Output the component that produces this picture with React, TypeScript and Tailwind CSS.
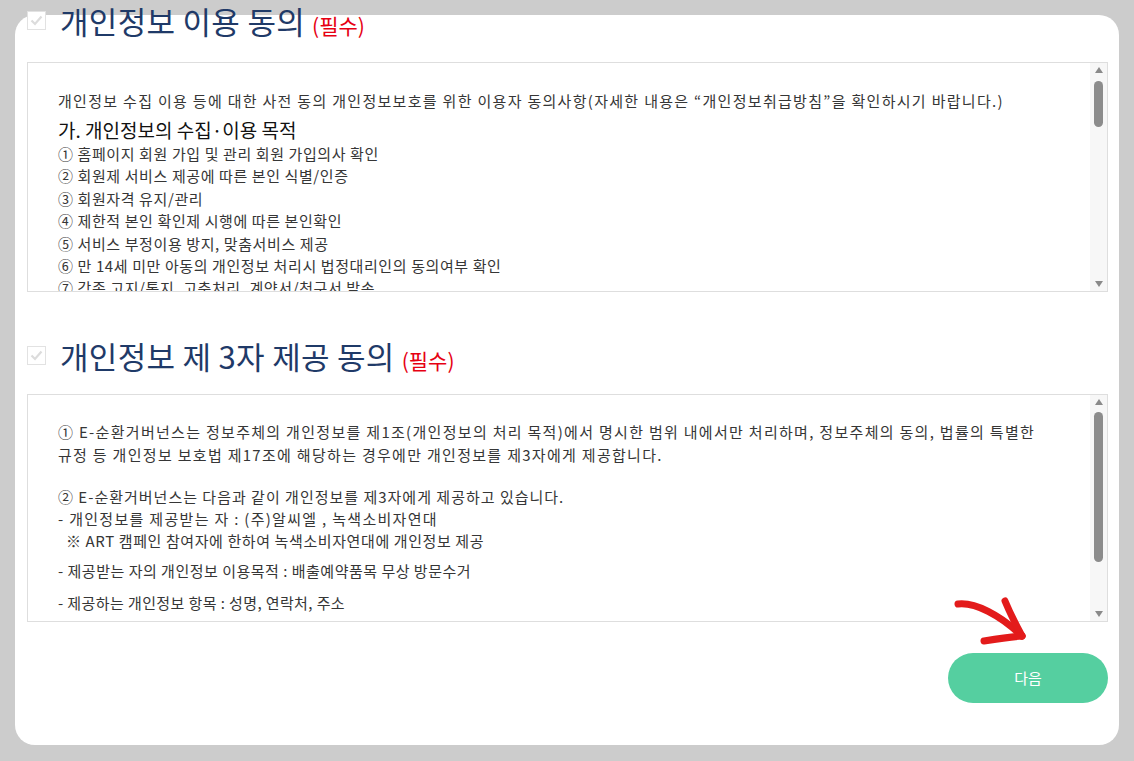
const FONT = "font-['Noto_Sans_CJK_KR','Noto_Sans',sans-serif]";

const FakeCheckbox = () => (
    <span className="flex h-[19px] w-[19px] shrink-0 items-center justify-center border border-[#e2e2e2] bg-white">
        <svg width="13" height="11" viewBox="0 0 13 11">
            <path d="M1.5 5.5 L5 9 L11.5 1.5" fill="none" stroke="#dcdcdc" strokeWidth="2.2" />
        </svg>
    </span>
);

const SectionTitle = ({ title }: { title: string }) => (
    <div className="flex h-[40px] items-center gap-[14px]">
        <FakeCheckbox />
        <h2 className="text-[31px] leading-none font-normal tracking-[0.3px] text-[#1f3a68]">
            {title}
            <span className="ml-[7px] text-[21px] tracking-normal text-[#e60012]">(필수)</span>
        </h2>
    </div>
);

const ScrollTrack = ({ thumbTop, thumbHeight }: { thumbTop: string; thumbHeight: string }) => (
    <div className="flex w-[17px] shrink-0 flex-col items-center bg-[#f7f7f7] py-[4px]">
        <svg width="8" height="6" viewBox="0 0 8 6" className="shrink-0">
            <path d="M0 6 L4 0 L8 6 Z" fill="#8a8a8a" />
        </svg>
        <div className="w-full flex-1 px-[4px]">
            <div className={`${thumbTop} ${thumbHeight} w-full rounded-full bg-[#8c8c8c]`} />
        </div>
        <svg width="8" height="6" viewBox="0 0 8 6" className="shrink-0">
            <path d="M0 0 L4 6 L8 0 Z" fill="#8a8a8a" />
        </svg>
    </div>
);

const usageItems = [
    "① 홈페이지 회원 가입 및 관리 회원 가입의사 확인",
    "② 회원제 서비스 제공에 따른 본인 식별/인증",
    "③ 회원자격 유지/관리",
    "④ 제한적 본인 확인제 시행에 따른 본인확인",
    "⑤ 서비스 부정이용 방지, 맞춤서비스 제공",
    "⑥ 만 14세 미만 아동의 개인정보 처리시 법정대리인의 동의여부 확인",
    "⑦ 각종 고지/통지, 고충처리, 계약서/청구서 발송",
];

export default function App() {
    return (
        <div className={`min-h-screen bg-[#cccccc] px-[15px] pt-[15px] ${FONT}`}>
            {/* Card */}
            <div className="relative flex h-[730px] flex-col rounded-[20px] bg-white pl-[12px] pr-[11px]">
                <div className="-mt-[15px]">
                    <SectionTitle title="개인정보 이용 동의" />
                </div>

                {/* Box 1 */}
                <div className="mt-[22px] flex h-[230px] shrink-0 border border-[#dedede]">
                    <div className="flex-1 overflow-hidden pl-[30px] pt-[27px] text-[#363636]">
                        <p className="whitespace-nowrap text-[15px] leading-[22px] tracking-[1.3px]">
                            개인정보 수집 이용 등에 대한 사전 동의 개인정보보호를 위한 이용자 동의사항(자세한 내용은 “개인정보취급방침”을 확인하시기 바랍니다.)
                        </p>
                        <h3 className="mt-[5px] text-[19px] leading-[26px] font-normal text-[#111]">가. 개인정보의 수집·이용 목적</h3>
                        <ul className="text-[15px] leading-[22.4px] tracking-[0.6px]">
                            {usageItems.map((item) => (
                                <li key={item}>{item}</li>
                            ))}
                        </ul>
                    </div>
                    <ScrollTrack thumbTop="mt-[8px]" thumbHeight="h-[46px]" />
                </div>

                <div className="mt-[43px]">
                    <SectionTitle title="개인정보 제 3자 제공 동의" />
                </div>

                {/* Box 2 */}
                <div className="mt-[19px] flex h-[228px] shrink-0 border border-[#dedede]">
                    <div className="flex-1 overflow-hidden pl-[30px] pt-[25px] text-[15px] leading-[23px] tracking-[0.6px] text-[#363636]">
                        <p className="whitespace-nowrap tracking-[1.3px]">
                            ① E-순환거버넌스는 정보주체의 개인정보를 제1조(개인정보의 처리 목적)에서 명시한 범위 내에서만 처리하며, 정보주체의 동의, 법률의 특별한
                            <br />
                            규정 등 개인정보 보호법 제17조에 해당하는 경우에만 개인정보를 제3자에게 제공합니다.
                        </p>
                        <p className="mt-[20px] leading-[22px] tracking-[1px]">② E-순환거버넌스는 다음과 같이 개인정보를 제3자에게 제공하고 있습니다.</p>
                        <p className="leading-[22px] tracking-[1.3px]">- 개인정보를 제공받는 자 : (주)알씨엘 , 녹색소비자연대</p>
                        <p className="pl-[8px] leading-[22px]">※ ART 캠페인 참여자에 한하여 녹색소비자연대에 개인정보 제공</p>
                        <p className="mt-[8px] leading-[22px] tracking-[0.5px]">- 제공받는 자의 개인정보 이용목적 : 배출예약품목 무상 방문수거</p>
                        <p className="mt-[10px] leading-[22px] tracking-[0.4px]">- 제공하는 개인정보 항목 : 성명, 연락처, 주소</p>
                    </div>
                    <ScrollTrack thumbTop="mt-[7px]" thumbHeight="h-[150px]" />
                </div>

                {/* Footer */}
                <div className="mt-[31px] flex justify-end">
                    <button className="h-[50px] w-[160px] rounded-full bg-[#55cfa0] text-[15px] text-white">
                        다음
                    </button>
                </div>

                {/* Hand-drawn arrow annotation */}
                <svg
                    className="pointer-events-none absolute left-[930px] top-[580px]"
                    width="95"
                    height="60"
                    viewBox="0 0 95 60"
                >
                    <path
                        d="M13 9 C 30 7, 55 20, 77 41"
                        fill="none"
                        stroke="#e31b1b"
                        strokeWidth="7"
                        strokeLinecap="round"
                    />
                    <path d="M60 6 C 65 18, 71 30, 77 41" fill="none" stroke="#e31b1b" strokeWidth="7" strokeLinecap="round" />
                    <path d="M39 46 C 52 44, 65 42, 77 41" fill="none" stroke="#e31b1b" strokeWidth="7" strokeLinecap="round" />
                </svg>
            </div>
        </div>
    );
}
